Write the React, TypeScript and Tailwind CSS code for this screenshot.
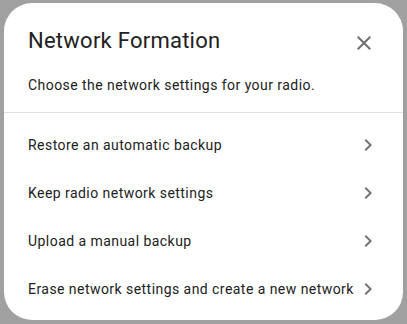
import React from 'react';

const items = [
  'Restore an automatic backup',
  'Keep radio network settings',
  'Upload a manual backup',
  'Erase network settings and create a new network',
];

const Chevron = () => (
  <svg width="24" height="24" viewBox="0 0 24 24" className="shrink-0 text-[#727272]">
    <path fill="currentColor" d="M8.59,16.58L13.17,12L8.59,7.41L10,6L16,12L10,18L8.59,16.58Z" />
  </svg>
);

const App: React.FC = () => {
  return (
    <div className="w-[407px] h-[324px] bg-[#a0a0a0] pt-[3px] px-[4px] overflow-hidden" style={{ fontFamily: 'Roboto, "Noto Sans", sans-serif' }}>
      <div className="w-[399px] h-[317px] bg-white rounded-[28px] flex flex-col">
        <div className="flex items-start justify-between pl-[24px] pr-[27px] pt-[24px]">
          <h2 className="text-[22px] leading-[28px] tracking-[0.25px] text-[#212121] font-normal">Network Formation</h2>
          <button className="w-[24px] h-[24px] mt-[4px] flex items-center justify-center text-[#707070]">
            <svg width="24" height="24" viewBox="0 0 24 24">
              <path fill="currentColor" d="M19,6.41L17.59,5L12,10.59L6.41,5L5,6.41L10.59,12L5,17.59L6.41,19L12,13.41L17.59,19L19,17.59L13.41,12L19,6.41Z" />
            </svg>
          </button>
        </div>
        <p className="pl-[24px] mt-[20px] text-[14px] leading-[20px] tracking-[0.45px] text-[#212121]">
          Choose the network settings for your radio.
        </p>
        <div className="mt-[17px] h-px bg-[#e0e0e0]" />
        <div className="pt-[8px] flex flex-col">
          {items.map(item => (
            <div key={item} className="h-[48px] flex items-center justify-between pl-[24px] pr-[23px]">
              <span className="text-[14px] leading-[20px] tracking-[0.45px] text-[#212121]">{item}</span>
              <Chevron />
            </div>
          ))}
        </div>
      </div>
    </div>
  );
};

export default App;
